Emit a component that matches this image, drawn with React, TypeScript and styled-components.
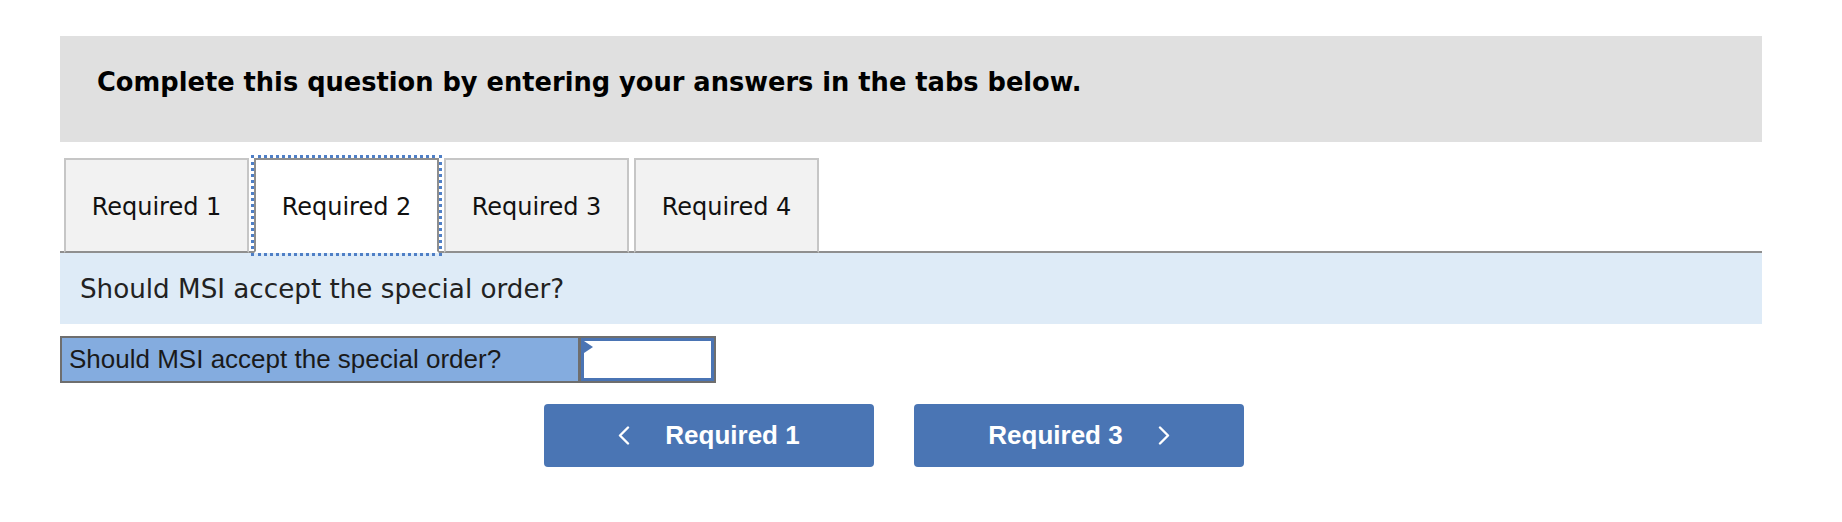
import styled, { createGlobalStyle } from 'styled-components'

const GlobalStyle = createGlobalStyle`
  body {
    margin: 0;
    background: #fff;
  }
`

const Page = styled.div`
  width: 1702px;
  padding: 36px 0 0 60px;
`

const Header = styled.div`
  height: 106px;
  box-sizing: border-box;
  background: #e0e0e0;
  padding: 31px 0 0 37px;
  font-family: 'DejaVu Sans', Verdana, sans-serif;
  font-weight: bold;
  font-size: 25.7px;
  line-height: 1.2;
  color: #000;
`

const TabList = styled.div`
  display: flex;
  align-items: flex-end;
  gap: 5px;
  margin-top: 16px;
  padding-left: 4px;
  border-bottom: 2px solid #8f8f8f;
`

const Tab = styled.button<{ $active?: boolean }>`
  width: 185px;
  height: 95px;
  margin-bottom: -2px;
  box-sizing: border-box;
  border: 2px solid ${(p) => (p.$active ? '#8e8e8e' : '#c6c6c6')};
  border-bottom: 2px solid ${(p) => (p.$active ? '#fff' : '#8f8f8f')};
  background: ${(p) => (p.$active ? '#fff' : '#f2f2f2')};
  outline: ${(p) => (p.$active ? '3px dotted #4f7fc6' : 'none')};
  outline-offset: 0;
  font-family: 'DejaVu Sans', Verdana, sans-serif;
  font-size: 24px;
  color: #111;
  padding: 2px 0 0;
  cursor: pointer;
`

const InfoBar = styled.div`
  height: 71px;
  display: flex;
  align-items: center;
  padding-left: 20px;
  background: #deebf7;
  font-family: 'DejaVu Sans', Verdana, sans-serif;
  font-size: 26.2px;
  color: #222;
`

const AnswerRow = styled.div`
  display: flex;
  width: 656px;
  height: 47px;
  margin-top: 12px;
  box-sizing: border-box;
  border: 2px solid #6e6e6e;
`

const AnswerLabel = styled.div`
  flex: 1;
  display: flex;
  align-items: center;
  padding-left: 7px;
  background: #84acdf;
  border-right: 3px solid #6e6e6e;
  font-family: 'Liberation Sans', Arial, sans-serif;
  font-size: 26px;
  color: #1a1a1a;
`

const AnswerInput = styled.div`
  position: relative;
  width: 133px;
  box-sizing: border-box;
  border: 3px solid #4a74b4;
  background: #fff;

  &::before {
    content: '';
    position: absolute;
    top: 0;
    left: 0;
    border-left: 9px solid #4a74b4;
    border-top: 6.5px solid transparent;
    border-bottom: 6.5px solid transparent;
  }
`

const NavRow = styled.div`
  display: flex;
  gap: 40px;
  margin-top: 21px;
  padding-left: 484px;
`

const NavButton = styled.button`
  width: 330px;
  height: 63px;
  display: flex;
  align-items: center;
  justify-content: center;
  gap: 35px;
  border: none;
  border-radius: 4px;
  background: #4a75b4;
  color: #fff;
  font-family: 'Liberation Sans', Arial, sans-serif;
  font-weight: bold;
  font-size: 26px;
  cursor: pointer;
`

const Chevron = ({ dir }: { dir: 'left' | 'right' }) => (
  <svg width="12" height="19" viewBox="0 0 12 19" fill="none">
    <polyline
      points={dir === 'left' ? '10,1.5 2,9.5 10,17.5' : '2,1.5 10,9.5 2,17.5'}
      stroke="#fff"
      strokeWidth="2.4"
      strokeLinecap="round"
      strokeLinejoin="round"
    />
  </svg>
)

const tabs = ['Required 1', 'Required 2', 'Required 3', 'Required 4']

export default function App() {
  return (
    <>
      <GlobalStyle />
      <Page>
        <Header>Complete this question by entering your answers in the tabs below.</Header>
        <TabList>
          {tabs.map((t) => (
            <Tab key={t} $active={t === 'Required 2'}>
              {t}
            </Tab>
          ))}
        </TabList>
        <InfoBar>Should MSI accept the special order?</InfoBar>
        <AnswerRow>
          <AnswerLabel>Should MSI accept the special order?</AnswerLabel>
          <AnswerInput />
        </AnswerRow>
        <NavRow>
          <NavButton>
            <Chevron dir="left" />
            Required 1
          </NavButton>
          <NavButton>
            Required 3
            <Chevron dir="right" />
          </NavButton>
        </NavRow>
      </Page>
    </>
  )
}
